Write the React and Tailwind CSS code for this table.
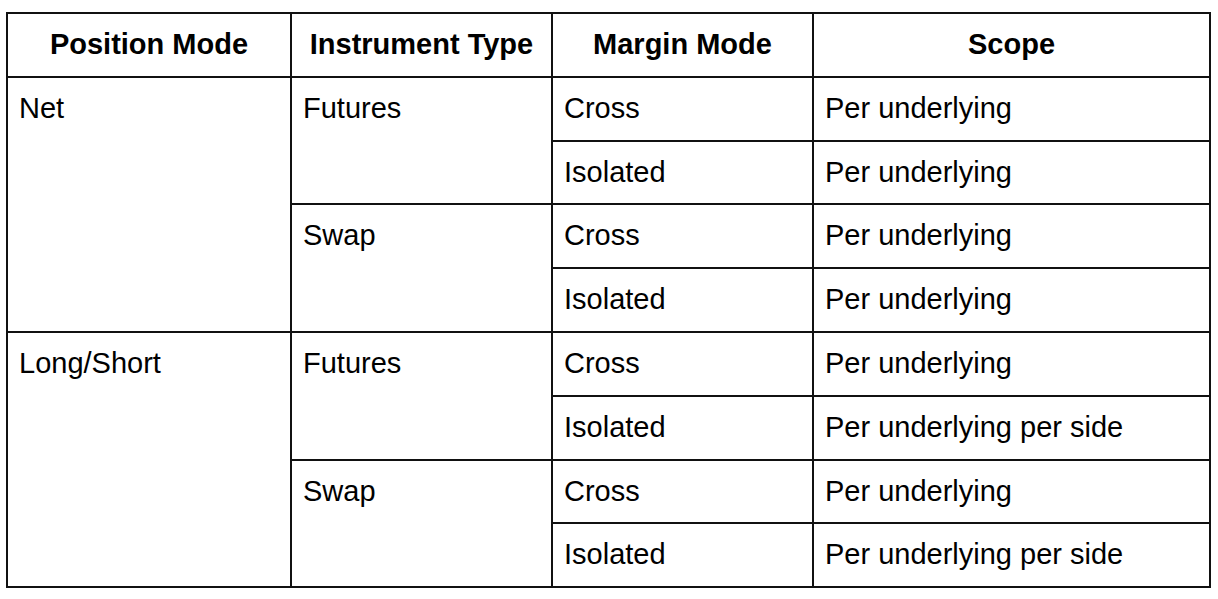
const rows = [
  { pos: "Net", inst: [
    { type: "Futures", items: [["Cross", "Per underlying"], ["Isolated", "Per underlying"]] },
    { type: "Swap", items: [["Cross", "Per underlying"], ["Isolated", "Per underlying"]] },
  ] },
  { pos: "Long/Short", inst: [
    { type: "Futures", items: [["Cross", "Per underlying"], ["Isolated", "Per underlying per side"]] },
    { type: "Swap", items: [["Cross", "Per underlying"], ["Isolated", "Per underlying per side"]] },
  ] },
];

const cell = "border-2 border-[#111] align-top pl-[11px] pt-[14px] font-normal";

export default function App() {
  const body = [];
  rows.forEach((g) => {
    const span = g.inst.reduce((n, i) => n + i.items.length, 0);
    g.inst.forEach((inst, ii) => {
      inst.items.forEach(([margin, scope], mi) => {
        body.push(
          <tr key={`${g.pos}-${ii}-${mi}`} className="h-[63.8px]">
            {ii === 0 && mi === 0 && <td rowSpan={span} className={cell}>{g.pos}</td>}
            {mi === 0 && <td rowSpan={inst.items.length} className={cell}>{inst.type}</td>}
            <td className={cell}>{margin}</td>
            <td className={cell}>{scope}</td>
          </tr>
        );
      });
    });
  });

  return (
    <div className="min-h-screen bg-white pt-[12px] pl-[6px]" style={{ fontFamily: '"Liberation Sans", Arial, sans-serif' }}>
      <table className="table-fixed border-collapse w-[1203px] text-[29px] text-black leading-[33px]">
        <colgroup>
          <col className="w-[284px]" />
          <col className="w-[261px]" />
          <col className="w-[261px]" />
          <col className="w-[397px]" />
        </colgroup>
        <thead>
          <tr className="h-[63.8px]">
            {["Position Mode", "Instrument Type", "Margin Mode", "Scope"].map((h) => (
              <th key={h} className="border-2 border-[#111] font-bold text-center align-middle">{h}</th>
            ))}
          </tr>
        </thead>
        <tbody>{body}</tbody>
      </table>
    </div>
  );
}
